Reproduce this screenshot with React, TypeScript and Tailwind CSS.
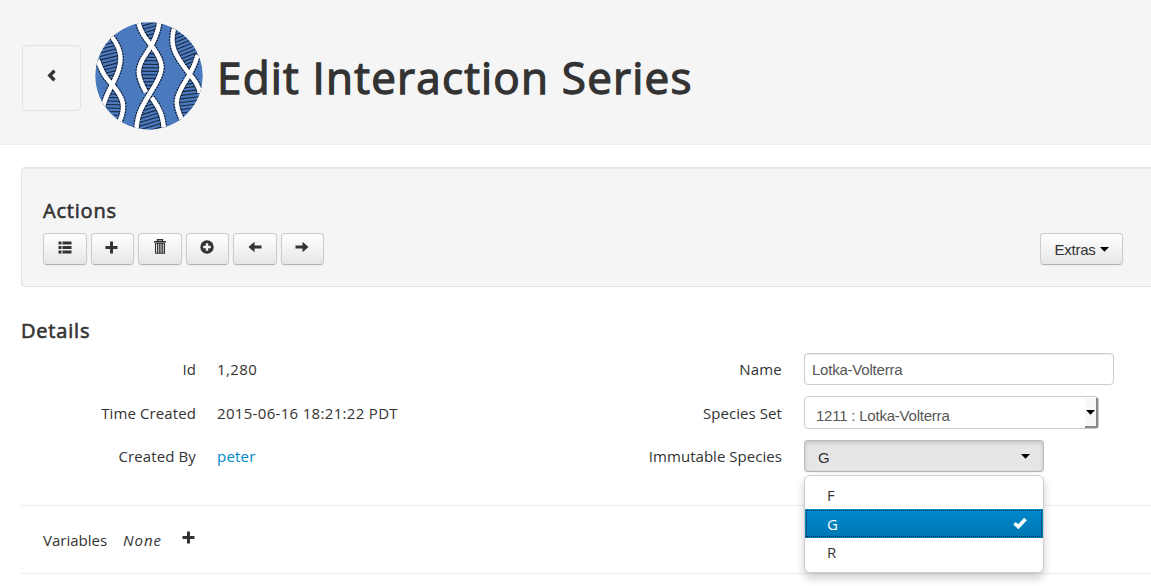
import React from 'react';

const lenses = [
  { id: 'l1', d: 'M305 85C338 130 336 165 308 225C285 195 272 180 266 155C270 120 280 100 305 85Z', x: 298, y: 155, tilt: -14 },
  { id: 'l2', d: 'M308 225C335 260 350 285 326 332L280 285C286 262 298 245 308 225Z', x: 310, y: 285, tilt: 2 },
  { id: 'm1', d: 'M385 36L448 36C444 62 438 82 425 108C410 84 396 70 385 36Z', x: 416, y: 65, tilt: -16 },
  { id: 'm2', d: 'M425 108C466 165 466 182 415 255C372 195 374 170 425 108Z', x: 420, y: 185, tilt: 1 },
  { id: 'm3', d: 'M415 255C445 290 458 315 462 362L378 362C382 315 392 290 415 255Z', x: 420, y: 318, tilt: -17 },
  { id: 'r1', d: 'M491 60C530 75 553 105 562 140C555 162 545 178 536 198C482 130 478 105 491 60Z', x: 525, y: 120, tilt: -22 },
  { id: 'r2', d: 'M536 198C550 220 562 232 570 248L558 280L514 325C488 275 505 255 536 198Z', x: 534, y: 265, tilt: -7 },
];
const rungs = [-8, -7, -6, -5, -4, -3, -2, -1, 0, 1, 2, 3, 4, 5, 6, 7, 8];
const strands = [
  'M262 150C276 192 288 206 308 228C338 265 348 287 328 335',
  'M305 82C338 125 339 160 308 220C294 247 286 260 279 288',
  'M448 34C442 72 433 96 411 127C377 174 378 196 407 248',
  'M383 34C390 67 405 85 425 110C462 160 461 180 433 228C395 290 381 308 378 362',
  'M424 264C450 300 458 319 461 362',
  'M491 57C478 105 490 131 535 190C551 210 563 222 569 250',
  'M562 136C554 165 548 178 530 207C492 267 492 281 514 329',
];

function Logo() {
  return (
    <svg className="ml-[13.500px] mt-[0.300px] size-[108px] shrink-0" viewBox="254 37 324 324" aria-hidden="true">
      <defs>
        <clipPath id="disc"><circle cx="416" cy="199" r="161" /></clipPath>
        {lenses.map((l) => <clipPath id={l.id} key={l.id}><path d={l.d} /></clipPath>)}
      </defs>
      <g clipPath="url(#disc)">
        <circle cx="416" cy="199" r="162" fill="#4a79bd" />
        {lenses.map((l) => (
          <g key={l.id} clipPath={`url(#${l.id})`}>
            <g transform={`translate(${l.x} ${l.y}) rotate(${l.tilt})`}>
              {rungs.map((i) => <path key={i} d={`M-60 ${i * 10.5}H60`} stroke="#18263c" strokeWidth="3.2" />)}
            </g>
          </g>
        ))}
        <g fill="none">
          {strands.map((d) => <path key={d} d={d} stroke="#0a0e16" strokeWidth="20.500" strokeDasharray="4 4" />)}
          {strands.map((d) => <path key={d} d={d} stroke="#fff" strokeWidth="13.500" />)}
        </g>
      </g>
    </svg>
  );
}

const Plus = ({ className = '' }: { className?: string }) => (
  <svg className={className} width="13" height="13" viewBox="0 0 13 13" fill="#333"><path d="M5 .5h3V5h4.500v3H8v4.500H5V8H.5V5H5z" /></svg>
);

const icons = [
  <svg width="14" height="13" viewBox="0 0 14 13" fill="#333"><path d="M.5.5h3v3h-3zM4.500.5h9v3h-9zM.5 5h3v3h-3zM4.500 5h9v3h-9zM.5 9.500h3v3h-3zM4.500 9.500h9v3h-9z" /></svg>,
  <Plus className="mr-[2px]" />,
  <svg className="mb-px ml-px" width="14" height="15" viewBox="0 0 14 15" fill="none" stroke="#333"><path d="M1 2.700h12M4.500 2V.7h5V2" strokeWidth="1.400" /><path d="M2.500 4v10.200h9V4M4.500 4v10M6.300 4v10M8 4v10M9.700 4v10M2.500 4.300h9" strokeWidth="1.100" /></svg>,
  <svg className="mb-px" width="14" height="14" viewBox="0 0 14 14"><circle cx="7" cy="7" r="6.700" fill="#333" /><path d="M5.800 3.200h2.400v2.600h2.600v2.400H8.200v2.600H5.800V8.200H3.200V5.800h2.600z" fill="#f4f4f4" /></svg>,
  <svg width="14" height="12" viewBox="0 0 14 12" fill="#333"><path d="M.5 6 6.500.8v3.700h7v3h-7v3.700z" /></svg>,
  <svg width="14" height="12" viewBox="0 0 14 12" fill="#333"><path d="M13.500 6 7.500.8v3.700h-7v3h7v3.700z" /></svg>,
];

const buttonStyle = 'rounded-[4px] border border-[#ccc] border-b-[#b3b3b3] bg-linear-to-b from-white to-[#e6e6e6] shadow-[inset_0_1px_0_rgba(255,255,255,.2),0_1px_2px_rgba(0,0,0,.05)]';
const arial = "font-['Liberation_Sans',Arial,sans-serif] tracking-[-0.220px]";
const heading = 'text-[20px] leading-[24px] tracking-[0.800px] [-webkit-text-stroke:0.600px_#333]';

const Caret = ({ className = '' }: { className?: string }) => (
  <svg className={className} width="9" height="5" viewBox="0 0 9 5"><path d="M0 0h9L4.500 4.700z" fill="#000" /></svg>
);

export default function App() {
  return (
    <div className="h-[586px] w-full overflow-hidden bg-white font-['Open_Sans',sans-serif] text-[15px] leading-[22px] text-[#333]">
      <header className="flex h-[145px] items-start border-b border-[#eee] bg-[#f5f5f5] pl-[22px] pt-[22px]">
        <button className="mt-[23px] flex h-[66px] w-[59px] items-start justify-center rounded-[4px] border border-[#e3e3e3] bg-[#f5f5f5] pt-[23px] shadow-[inset_0_1px_1px_rgba(0,0,0,.02)]" aria-label="Back">
          <svg className="mr-px" width="9" height="13" viewBox="0 0 9 13" fill="none" stroke="#333" strokeWidth="3.400"><path d="m7.500 1.800-4.700 4.700 4.700 4.700" /></svg>
        </button>
        <Logo />
        <h1 className="ml-[14.500px] mt-[25px] whitespace-nowrap text-[44px] leading-[60px] tracking-[1.200px] [-webkit-text-stroke:1.300px_#333]">Edit Interaction Series</h1>
      </header>

      <section className="ml-[21px] mt-[22px] h-[120px] rounded-l-[4px] border border-r-0 border-[#e3e3e3] bg-[#f5f5f5] pl-[21px] pr-[28px] pt-[31px] shadow-[inset_0_1px_1px_rgba(0,0,0,.05)]">
        <h2 className={heading}>Actions</h2>
        <div className="mt-[10px] flex items-center justify-between">
          <div className="flex gap-[4px]">
            {icons.map((icon, i) => <button key={i} className={`flex h-[32px] w-[43.500px] items-center justify-center pb-[4px] ${buttonStyle}`}>{icon}</button>)}
          </div>
          <button className={`flex h-[32px] w-[83px] items-center justify-center pt-px ${arial} ${buttonStyle}`}>Extras<Caret className="mb-[1px] ml-[4px]" /></button>
        </div>
      </section>

      <h2 className={`ml-[21px] mt-[32px] ${heading}`}>Details</h2>
      <div className="ml-[21px] mt-[10px] flex h-[153px] border-b border-[#eee]">
        <dl className="grid h-[132px] w-[565px] grid-cols-[175px_1fr] grid-rows-[44px_43px_44px] gap-x-[21px] pt-[5px]">
          <dt className="text-right tracking-[0.100px]">Id</dt><dd className="tracking-[0.400px]">1,280</dd>
          <dt className="text-right tracking-[0.100px]">Time Created</dt><dd className="tracking-[0.320px]">2015-06-16 18:21:22 PDT</dd>
          <dt className="text-right tracking-[0.120px]">Created By</dt><dd className="tracking-[0.200px]"><a className="text-[#0088cc]">peter</a></dd>
        </dl>
        <div className="grid grid-cols-[196px_310px] grid-rows-[44px_43px_44px] gap-x-[22px]">
          <label className="pt-[5px] text-right tracking-[0.200px]">Name</label>
          <div className={`flex h-[32px] items-center rounded-[4px] border border-[#ccc] bg-white pl-[7px] pt-px text-[#555] shadow-[inset_0_1px_1px_rgba(0,0,0,.075)] ${arial}`}>Lotka-Volterra</div>
          <label className="pt-[5px] text-right tracking-[0.070px]">Species Set</label>
          <div className={`-mt-px flex h-[33px] w-[295px] items-center justify-between rounded-[4px] border border-[#ccc] bg-white pl-[11px] text-[#555] ${arial}`}>
            <span className="pt-[7px]">1211 : Lotka-Volterra</span>
            <span className="flex h-[30px] w-[13px] items-center justify-center border-b-2 border-r-2 border-[#888] bg-[#f8f8f7]"><Caret className="mt-[1px]" /></span>
          </div>
          <label className="pt-[5px] text-right tracking-[0.040px]">Immutable Species</label>
          <div className={`relative flex h-[32px] w-[240px] items-center justify-between rounded-[4px] border border-[#bbb] border-b-[#b3b3b3] bg-[#e6e6e6] pl-[13px] pr-[13px] shadow-[inset_0_2px_4px_rgba(0,0,0,.15),0_1px_2px_rgba(0,0,0,.05)] ${arial}`}>
            <span className="pt-[4px]">G</span><Caret className="mt-px" />
            <ul className="absolute left-[-1px] top-[34px] z-10 h-[98px] w-[240px] rounded-[6px] border border-[#ccc] bg-white pt-[5px] font-['Open_Sans',sans-serif] shadow-[0_5px_10px_rgba(0,0,0,.2)]">
              <li className="h-[28px] pl-[22px] pt-[3px]">F</li>
              <li className="flex h-[29px] items-center justify-between bg-linear-to-b from-[#0088cc] to-[#0077b3] pl-[22px] pr-[16px] text-white outline-1 -outline-offset-2 outline-dotted outline-[#00344e]">
                <span>G</span>
                <svg className="mb-[2px]" width="14" height="12" viewBox="0 0 14 12" fill="none" stroke="white" strokeWidth="3.600"><path d="m1.500 6.200 3.800 3.500L12.500 2" /></svg>
              </li>
              <li className="h-[28px] pl-[22px] pt-[3px]">R</li>
            </ul>
          </div>
        </div>
      </div>
      <div className="ml-[21px] flex h-[68px] border-b border-[#eee] pl-[22px] pt-[23px]">
        <span>Variables</span><em className="ml-[16px] tracking-[0.900px]">None</em><Plus className="ml-[20px] mt-[2px]" />
      </div>
    </div>
  );
}
